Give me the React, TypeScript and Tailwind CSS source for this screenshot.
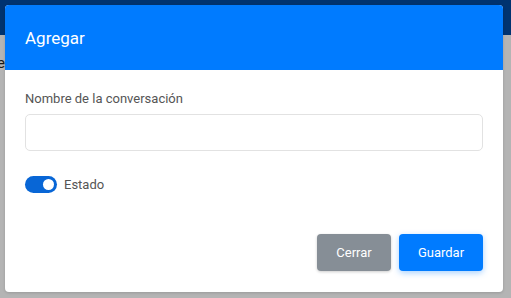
import React from "react";

export default function App() {
  return (
    <div
      className="relative w-[511px] h-[298px] overflow-hidden bg-[#b4b4b4]"
      style={{ fontFamily: "Roboto, 'Liberation Sans', sans-serif" }}
    >
      <div className="h-[35px] bg-[#003370]" />
      <div className="text-[#1a1a1a] text-[15px] leading-none">
        <div className="mt-[21px] -ml-[3px]">e</div>
        <div className="mt-[164px] -ml-[8px]">a</div>
      </div>

      <div className="absolute left-[5px] top-[5px] w-[498px] h-[287px] bg-white rounded-[4px] flex flex-col overflow-hidden shadow-[0_1px_3px_rgba(0,0,0,0.15)]">
        <div className="h-[65px] bg-[#007bff] flex items-center px-[20px] shrink-0">
          <span className="text-white text-[17px] leading-none pt-[1px]">Agregar</span>
        </div>
        <div className="px-[20px] pt-[22px] flex flex-col">
          <label className="text-[13px] leading-none text-[#555]">Nombre de la conversación</label>
          <div className="mt-[9px] h-[37px] border border-[#e2e2e2] rounded-[5px] w-[458px]" />
          <div className="mt-[25px] flex items-center gap-[7px]">
            <div className="w-[32px] h-[17px] rounded-full bg-[#0866d6] flex items-center justify-end pr-[3px]">
              <div className="w-[11px] h-[11px] rounded-full bg-white" />
            </div>
            <span className="text-[13px] text-[#555] leading-none">Estado</span>
          </div>
        </div>
        <div className="mt-auto mb-[21px] px-[20px] flex justify-end gap-[8px]">
          <button className="w-[74px] h-[37px] rounded-[4px] bg-[#868e96] text-white text-[13px] shadow-[0_1px_3px_rgba(0,0,0,0.2)]">
            Cerrar
          </button>
          <button className="w-[84px] h-[37px] rounded-[4px] bg-[#007bff] text-white text-[13px] shadow-[0_2px_6px_rgba(0,123,255,0.35)]">
            Guardar
          </button>
        </div>
      </div>
    </div>
  );
}
